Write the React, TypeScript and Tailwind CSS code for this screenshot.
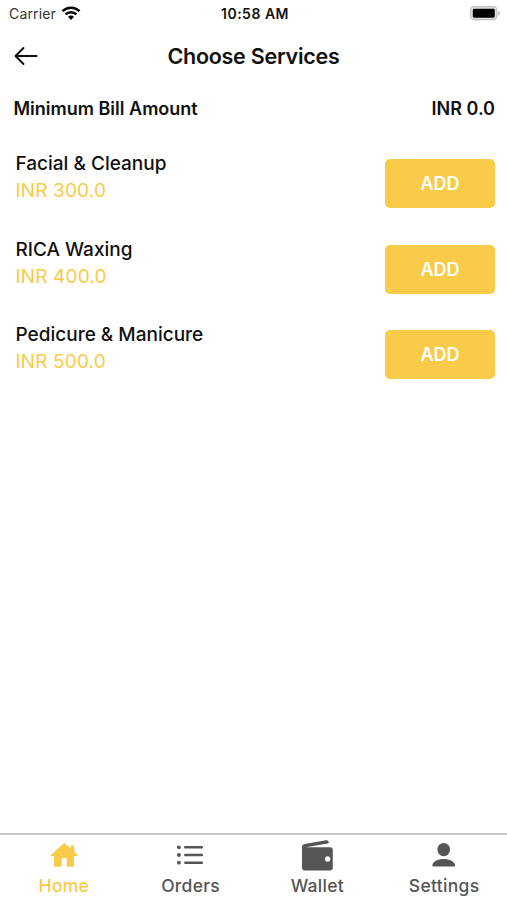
import { useState } from 'react'

type Tab = 'Home' | 'Orders' | 'Wallet' | 'Settings'

const services = [
  { name: 'Facial & Cleanup', price: 'INR 300.0' },
  { name: 'RICA Waxing', price: 'INR 400.0' },
  { name: 'Pedicure & Manicure', price: 'INR 500.0' },
]

function WifiIcon() {
  return (
    <svg width="20" height="16" viewBox="0 0 20 16" fill="none" stroke="#000" strokeWidth="2.5">
      <path d="M1.5 6.1C6.3 1.5 13.7 1.5 18.5 6.1" />
      <path d="M4.5 9.4c3.1-3 7.9-3 11 0" />
      <path d="M7 11.800c1.800-1.600 4.200-1.600 6 0l-3 3.100z" fill="#000" stroke="none" />
    </svg>
  )
}

function BatteryIcon() {
  return (
    <svg width="32" height="16" viewBox="0 0 32 16">
      <rect x="1.5" y="1.7" width="26.4" height="13" rx="3.6" fill="#e2e2e2" stroke="#bdbdbd" strokeWidth="1.2" />
      <rect x="3.8" y="3.7" width="22" height="9" rx="1.4" fill="#000" />
      <path d="M29.3 5.8c2.2.6 2.2 4.2 0 4.8z" fill="#b5b5b5" />
    </svg>
  )
}

function HomeIcon() {
  return (
    <svg width="32" height="32" viewBox="0 0 32 32" fill="#f9cb48">
      <path d="M17 3 23.600 8.300V5.500h3.600v5.900L30.800 15.200v.9h-3.900v10.700h-7.200v-8.800h-5.100v8.800H7V16.100H3.600v-.9z" />
    </svg>
  )
}

function OrdersIcon() {
  return (
    <svg width="32" height="32" viewBox="0 0 32 32" fill="none" stroke="#555" strokeWidth="2.5" strokeLinecap="round">
      <path d="M11.300 7.300h16.500M11.300 15h16.500M11.300 22.700h16.500" />
      <g fill="#555" stroke="none">
        <circle cx="4.9" cy="7.3" r="1.9" />
        <circle cx="4.9" cy="15" r="1.9" />
        <circle cx="4.9" cy="22.7" r="1.9" />
      </g>
    </svg>
  )
}

function WalletIcon() {
  return (
    <svg width="32" height="32" viewBox="0 0 32 32" fill="#555">
      <path d="M1 7.200C1 5.500 2 4.300 3.800 4L25 .2c1.600-.3 2.600.4 2.800 1.900.1.900-.3 1.400-1.200 1.500L5 7.300H29.200c1.600 0 2.600 1.100 2.600 2.600v17.900c0 1.600-1 2.600-2.600 2.600H3.600C2 30.400 1 29.400 1 27.800z" />
      <circle cx="26.600" cy="19" r="2.700" fill="#fff" />
    </svg>
  )
}

function SettingsIcon() {
  return (
    <svg width="32" height="32" viewBox="0 0 32 32" fill="#555">
      <ellipse cx="15.700" cy="9.600" rx="6.300" ry="6.700" />
      <path d="M4.400 25.600c0-3.900 5.400-6.500 11.300-6.500S27 21.700 27 25.600c0 .6-.4 1-1 1H5.400c-.6 0-1-.4-1-1z" />
    </svg>
  )
}

const tabs: { id: Tab; icon: () => React.ReactNode }[] = [
  { id: 'Home', icon: HomeIcon },
  { id: 'Orders', icon: OrdersIcon },
  { id: 'Wallet', icon: WalletIcon },
  { id: 'Settings', icon: SettingsIcon },
]

function App() {
  const [activeTab, setActiveTab] = useState<Tab>('Home')

  return (
    <div className="flex h-[900px] w-[507px] flex-col overflow-hidden bg-white font-['Inter',sans-serif] text-[#111]">
      {/* Status bar */}
      <div className="grid h-[26px] grid-cols-3 items-center pl-[9px] pr-[6px] text-[14px]">
        <div className="flex items-center gap-[5px] tracking-[0.15px] text-[#333]">
          <span>Carrier</span>
          <WifiIcon />
        </div>
        <span className="text-center font-semibold tracking-[0.5px]">10:58 AM</span>
        <div className="flex justify-end">
          <BatteryIcon />
        </div>
      </div>

      {/* Header */}
      <header className="grid h-[60px] grid-cols-[60px_1fr_60px] items-center">
        <button className="pl-[14px]" aria-label="Back">
          <svg width="26" height="20" viewBox="0 0 26 20" fill="none" stroke="#111" strokeWidth="1.9" strokeLinecap="round" strokeLinejoin="round">
            <path d="M22.600 10H2M9.500 2 1.500 10l8 8" />
          </svg>
        </button>
        <h1 className="text-center text-[21.5px] font-semibold tracking-[-0.25px]">Choose Services</h1>
      </header>

      {/* Minimum bill */}
      <div className="flex h-11 items-center justify-between pl-[13.5px] pr-3 text-[18px] font-semibold">
        <span>Minimum Bill Amount</span>
        <span>INR 0.0</span>
      </div>

      {/* Services */}
      <main className="flex-1 pt-[11px]">
        {services.map((service) => (
          <div key={service.name} className="flex h-[85.5px] items-center justify-between pl-[15.5px] pr-3">
            <div className="pb-[13px] text-[19px] leading-[27px]">
              <p className="font-medium">{service.name}</p>
              <p className="tracking-[0.15px] text-[#f9cb48]">{service.price}</p>
            </div>
            <button className="h-[49px] w-[110px] rounded-[5px] bg-[#f9cb48] text-[18px] font-semibold text-white">
              ADD
            </button>
          </div>
        ))}
      </main>

      {/* Tab bar */}
      <nav className="grid h-[67px] grid-cols-4 border-t-2 border-[#c8c8c8] pt-[5px]">
        {tabs.map(({ id, icon: Icon }) => (
          <button
            key={id}
            onClick={() => setActiveTab(id)}
            className={`flex flex-col items-center text-[17.5px] font-medium leading-[28px] tracking-[0.3px] ${
              activeTab === id ? 'text-[#f9cb48]' : 'text-[#555]'
            }`}
          >
            <Icon />
            <span className="pl-px">{id}</span>
          </button>
        ))}
      </nav>
    </div>
  )
}

export default App
